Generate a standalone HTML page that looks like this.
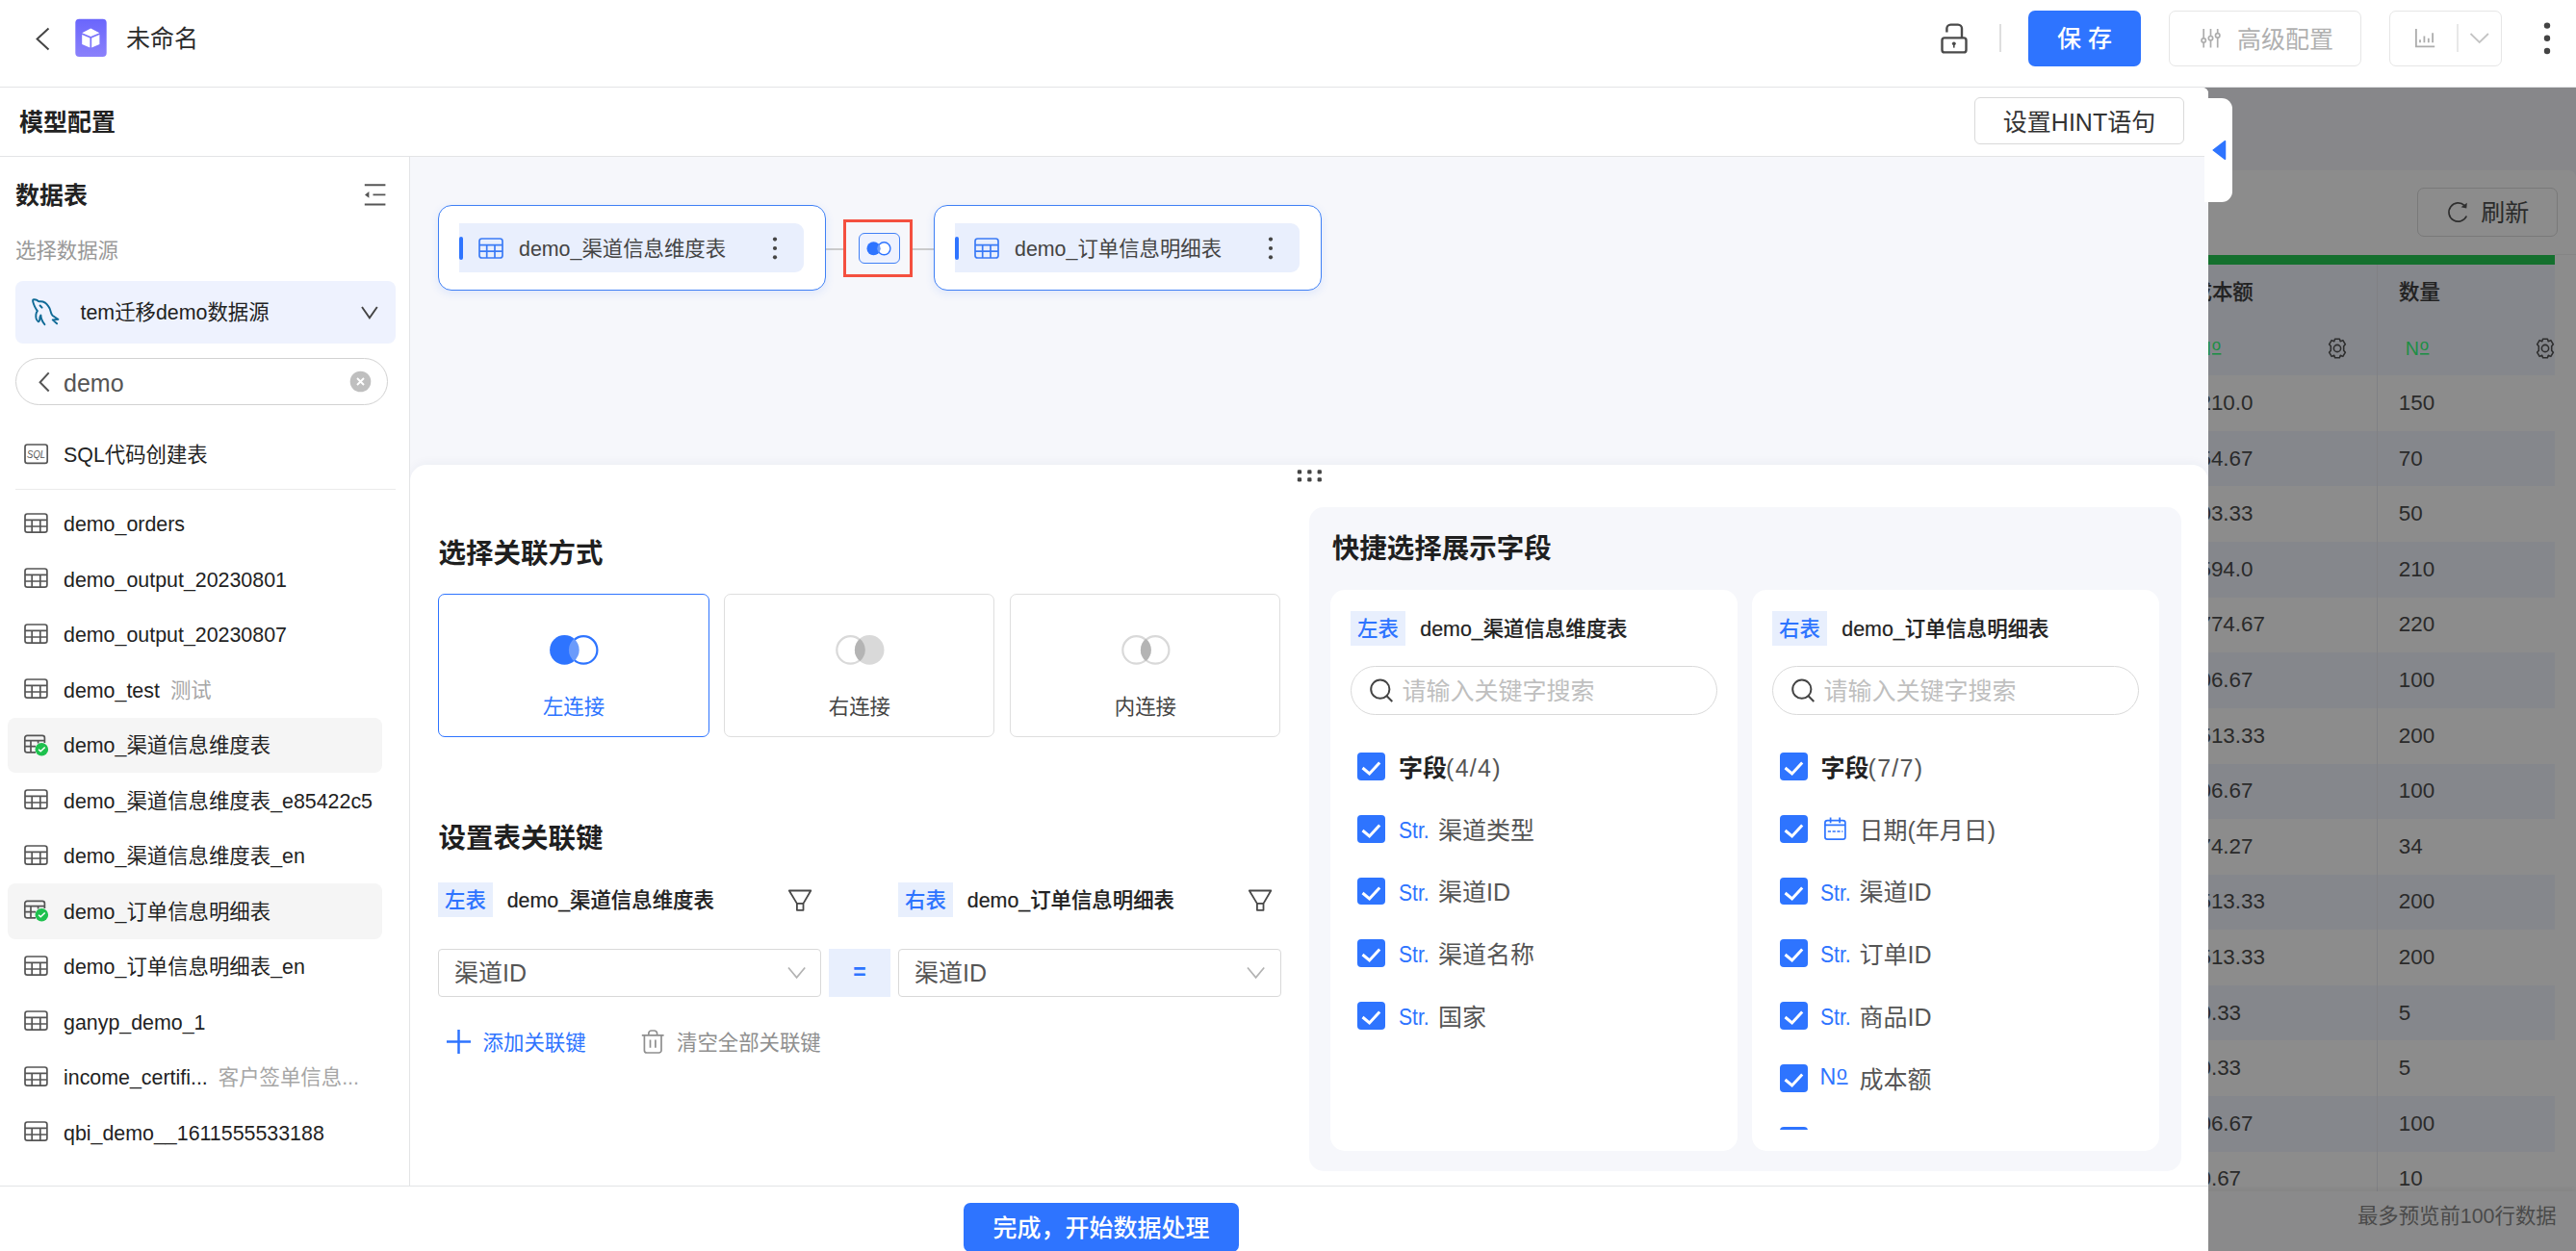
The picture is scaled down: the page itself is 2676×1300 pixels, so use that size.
<!DOCTYPE html>
<html lang="zh-CN">
<head>
<meta charset="utf-8">
<title>模型配置</title>
<style>
*{box-sizing:border-box;margin:0;padding:0}
html,body{width:2676px;height:1300px;overflow:hidden;background:#fff}
body{position:relative;font-family:"Liberation Sans","Noto Sans CJK SC",sans-serif;color:#333;font-size:21.4px;-webkit-font-smoothing:antialiased}
.abs{position:absolute}
.t{position:absolute;white-space:nowrap;line-height:1;transform:translateY(-50%)}
svg{position:absolute;overflow:visible}
.b{font-weight:700}
.m{font-weight:500;-webkit-text-stroke:.2px currentColor}
/* ---------- top header ---------- */
#hdr{position:absolute;left:0;top:0;width:2676px;height:91px;background:#fff;border-bottom:1px solid #e3e4e6}
.btn{position:absolute;top:11px;height:58px;border-radius:7px}
/* ---------- underlying page (right) ---------- */
#under{position:absolute;left:2280px;top:91px;width:396px;height:1209px;background:#87878a;overflow:hidden}
.trow{position:absolute;left:0;width:374px;height:57.6px}
.tc{position:absolute;top:50%;transform:translateY(-50%);line-height:1;font-size:22.400px;color:#2a2a2a;white-space:nowrap}
/* ---------- modal ---------- */
#modal{position:absolute;left:0;top:91px;width:2294px;border-radius:0 6px 0 0;height:1209px;background:#fff;overflow:hidden}
#mhead{position:absolute;left:0;top:0;width:2294px;height:72px;border-bottom:1px solid #e3e4e6;background:#fff}
#side{position:absolute;left:0;top:72px;width:426px;height:1069px;border-right:1px solid #e3e4e6;background:#fff}
#canvas{position:absolute;left:426px;top:72px;width:1868px;height:1069px;background:#f6f7fb;overflow:hidden}
#foot{position:absolute;left:0;top:1141px;width:2294px;height:68px;border-top:1px solid #e3e4e6;background:#fff}
.li{position:absolute;left:8px;width:389px;height:57.5px;border-radius:8px}
.li.sel{background:#f5f5f5}
.li svg{left:17px;top:17px}
.li .t{left:58px;top:calc(50% + 1.6px);color:#222}
.li .g{color:#a6a6a6;margin-left:11px}
.node{position:absolute;top:50px;height:89px;border:1.5px solid #3f80f5;border-radius:14px;background:#fff;box-shadow:0 3px 10px rgba(46,116,255,.12)}
.chip{position:absolute;left:21px;top:18px;height:51px;background:#e9effd;border-radius:0 9px 9px 0}
.chip i{position:absolute;left:0;top:13.500px;width:4px;height:24.500px;background:#2e74ff;border-radius:2px}
#panel{position:absolute;left:0;top:320px;width:1868px;height:760px;background:#fff;border-radius:17px 17px 0 0;box-shadow:0 -3px 10px rgba(30,40,90,.04)}
.h2{font-size:28.5px;font-weight:700;color:#1f1f1f}
.jc{position:absolute;top:134px;width:281.300px;height:149px;border:1px solid #dedede;border-radius:7px;background:#fff}
.jc.on{border:1.5px solid #2e74ff}
.jc .t{left:0;width:100%;text-align:center;top:117.500px;color:#444}
.jc.on .t{color:#2e74ff}
.tag{position:absolute;width:57px;height:36px;background:#e8effd;color:#2e74ff;text-align:center;line-height:38px;font-size:21.4px;font-weight:500;white-space:nowrap}
.sel2{position:absolute;top:503px;height:50px;border:1px solid #d9d9d9;border-radius:4px;background:#fff}
.sel2 .t{left:16px;top:50%;font-size:25px;color:#555}
#quick{position:absolute;left:934px;top:44px;width:906px;height:690px;background:#f6f7fb;border-radius:15px}
.qc{position:absolute;top:86px;width:423px;height:583px;background:#fff;border-radius:15px;overflow:hidden}
.qlist{position:absolute;left:0;top:0;width:423px;height:561px;overflow:hidden}
.srch{position:absolute;left:21px;top:79px;width:381px;height:51px;border:1px solid #d9d9d9;border-radius:26px;background:#fff}
.srch .t{left:52.500px;top:50%;font-size:25px;color:#bfbfbf}
.cb{position:absolute;left:28px;width:29px;height:29px;border-radius:4px;background:#2e74ff}
.cb svg{left:0;top:0}
.fr{position:absolute;left:0;width:423px;height:29px}
.fr .t{top:50%;font-size:25px;color:#555}
.fr .ty{left:72px;color:#2e74ff;font-size:24px;letter-spacing:-1px}
.fr .nm{left:112px}
</style>
</head>
<body>
<div id="hdr">
<svg style="left:0;top:0" width="130" height="90"><path d="M50.5 29.5 L38.6 40.4 L50.5 51.5" fill="none" stroke="#444" stroke-width="2"/>
<defs><linearGradient id="lg" x1="0" y1="0" x2="0" y2="1"><stop offset="0" stop-color="#6a66fc"/><stop offset="1" stop-color="#8b81fb"/></linearGradient></defs>
<rect x="78.3" y="19.8" width="32.4" height="39.3" rx="4" fill="url(#lg)"/>
<path d="M94.3 29.4 L103.4 34.2 L94.3 38 L85.2 34.2 Z M85.2 36 L93.4 39.5 L93.4 49.4 L85.2 45.9 Z M103.4 36 L95.2 39.5 L95.2 49.4 L103.4 45.9 Z" fill="#fff"/></svg>
<span class="t" style="left:131px;top:40px;font-size:25px;color:#2b2b2b">未命名</span>
<svg style="left:2010px;top:20px" width="40" height="40"><rect x="7.5" y="19.4" width="25" height="15" rx="2.5" fill="none" stroke="#4a4a4a" stroke-width="2.4"/><path d="M12.4 13.5 V9.6 a4 4 0 0 1 4 -4 h7.6 a4 4 0 0 1 4 4 V19" fill="none" stroke="#4a4a4a" stroke-width="2.4"/><circle cx="19.8" cy="25.3" r="1.9" fill="#4a4a4a"/><rect x="19" y="26" width="1.6" height="3.6" fill="#4a4a4a"/></svg>
<div class="abs" style="left:2077px;top:25px;width:2px;height:29px;background:#dedede"></div>
<div class="btn" style="left:2107px;width:117px;background:#2e74ff"><span class="t" style="left:0;width:100%;text-align:center;top:29px;font-size:25px;font-weight:500;color:#fff;white-space:pre">保 存</span></div>
<div class="btn" style="left:2253px;width:200px;border:1px solid #e6e6e6;background:#fff">
<svg style="left:28.500px;top:13px" width="30" height="30" stroke="#adadad" stroke-width="1.7" fill="#fff"><path d="M6.2 4.9V24.5M13.5 4.9V24.5M20.7 4.9V24.5"/><circle cx="6.2" cy="17" r="2.2"/><circle cx="13.5" cy="14.7" r="2.2"/><circle cx="20.7" cy="11.9" r="2.2"/></svg>
<span class="t" style="left:70px;top:29px;font-size:25px;color:#b0b0b0">高级配置</span></div>
<div class="btn" style="left:2482px;width:117px;border:1px solid #e6e6e6;background:#fff">
<svg style="left:19.700px;top:13px" width="30" height="30" stroke="#adadad" stroke-width="1.8" fill="none"><path d="M6.9 5V23.3H26.200M11 19.3V16.2M15.4 19.3V12.5M19.8 19.3V14.8M24.1 19.3V9.2"/></svg>
<div class="abs" style="left:69px;top:13px;width:2px;height:29px;background:#e8e8e8"></div>
<svg style="left:79.300px;top:17.300px" width="30" height="20" stroke="#c4c4c4" stroke-width="1.8" fill="none"><path d="M4.5 6 L13.7 15 L22.9 6"/></svg></div>
<svg style="left:2636px;top:18px" width="20" height="44" fill="#444"><circle cx="10" cy="8.6" r="3.2"/><circle cx="10" cy="21.8" r="3.2"/><circle cx="10" cy="35" r="3.2"/></svg>
</div>
<div id="under">
<div class="abs" style="left:0;top:86px;width:396px;height:1130px;background:#8c8c8c;border-radius:0 7px 0 0"></div>
<div class="abs" style="left:231.3px;top:103.600px;width:146px;height:51px;border:1px solid #797979;border-radius:7px"><svg style="left:28.500px;top:12px" width="26" height="26" fill="none" stroke="#2e2e2e" stroke-width="1.700"><path d="M19.200 5.600A9.600 9.600 0 1 0 21.300 16.500"/><path d="M21.800 2.800L21.300 8.600L15.600 7.200Z" fill="#2e2e2e" stroke="none"/></svg><span class="t" style="left:65px;top:25.300px;font-size:25px;color:#2b2b2b">刷新</span></div>
<div class="abs" style="left:374px;top:173px;width:30px;height:1px;background:#858585"></div>
<div class="abs" style="left:0;top:173.8px;width:374px;height:10.200px;background:#14702e"></div>
<div class="abs" style="left:0;top:184px;width:374px;height:115.500px;background:#85878c;border-bottom:1px solid #7e8085"></div>
<div class="trow" style="top:299.3px;background:#8c8c8c"><span class="tc" style="left:-8px">1210.0</span><span class="tc" style="left:211.8px">150</span></div>
<div class="trow" style="top:356.9px;background:#85878c"><span class="tc" style="left:-8px">354.67</span><span class="tc" style="left:211.8px">70</span></div>
<div class="trow" style="top:414.5px;background:#8c8c8c"><span class="tc" style="left:-8px">303.33</span><span class="tc" style="left:211.8px">50</span></div>
<div class="trow" style="top:472.1px;background:#85878c"><span class="tc" style="left:-8px">1594.0</span><span class="tc" style="left:211.8px">210</span></div>
<div class="trow" style="top:529.7px;background:#8c8c8c"><span class="tc" style="left:-8px">1774.67</span><span class="tc" style="left:211.8px">220</span></div>
<div class="trow" style="top:587.3px;background:#85878c"><span class="tc" style="left:-8px">306.67</span><span class="tc" style="left:211.8px">100</span></div>
<div class="trow" style="top:644.9px;background:#8c8c8c"><span class="tc" style="left:-8px">1513.33</span><span class="tc" style="left:211.8px">200</span></div>
<div class="trow" style="top:702.5px;background:#85878c"><span class="tc" style="left:-8px">306.67</span><span class="tc" style="left:211.8px">100</span></div>
<div class="trow" style="top:760.1px;background:#8c8c8c"><span class="tc" style="left:-8px">374.27</span><span class="tc" style="left:211.8px">34</span></div>
<div class="trow" style="top:817.7px;background:#85878c"><span class="tc" style="left:-8px">1513.33</span><span class="tc" style="left:211.8px">200</span></div>
<div class="trow" style="top:875.3px;background:#8c8c8c"><span class="tc" style="left:-8px">1513.33</span><span class="tc" style="left:211.8px">200</span></div>
<div class="trow" style="top:932.9px;background:#85878c"><span class="tc" style="left:-8px">30.33</span><span class="tc" style="left:211.8px">5</span></div>
<div class="trow" style="top:990.5px;background:#8c8c8c"><span class="tc" style="left:-8px">30.33</span><span class="tc" style="left:211.8px">5</span></div>
<div class="trow" style="top:1048.1px;background:#85878c"><span class="tc" style="left:-8px">306.67</span><span class="tc" style="left:211.8px">100</span></div>
<div class="trow" style="top:1105.7px;background:#8c8c8c"><span class="tc" style="left:-8px">30.67</span><span class="tc" style="left:211.8px">10</span></div>
<div class="abs" style="left:189px;top:184px;width:1px;height:963px;background:#808185"></div>
<span class="t m" style="left:-3.5px;top:214.3px;color:#222">成本额</span><span class="t m" style="left:212px;top:214.3px;color:#222">数量</span>
<svg style="left:3.6px;top:262.5px" width="28" height="20" fill="#1c8f45" font-family="Liberation Sans,sans-serif"><text x="-1.200" y="14.700" font-size="20.300" textLength="14.200" lengthAdjust="spacingAndGlyphs">N</text><text x="13.800" y="10" font-size="16.800">o</text><path d="M14.100 13.800H23.400" stroke="#1c8f45" stroke-width="1.600"/></svg><svg style="left:219.7px;top:262.5px" width="28" height="20" fill="#1c8f45" font-family="Liberation Sans,sans-serif"><text x="-1.200" y="14.700" font-size="20.300" textLength="14.200" lengthAdjust="spacingAndGlyphs">N</text><text x="13.800" y="10" font-size="16.800">o</text><path d="M14.100 13.800H23.400" stroke="#1c8f45" stroke-width="1.600"/></svg>
<svg style="left:136.30000000000018px;top:258.7px" width="24" height="24" viewBox="-12.900 -12.900 25.800 25.800" fill="none" stroke="#2e2e2e" stroke-width="1.700" stroke-linejoin="round"><path d="M-2.6 -10.400 L2.600 -10.400 L3.500 -7.800 L6.300 -9 L9 -4.500 L7.200 -2.300 L7.200 2.300 L9 4.500 L6.300 9 L3.500 7.800 L2.600 10.400 L-2.600 10.400 L-3.500 7.800 L-6.300 9 L-9 4.500 L-7.200 2.300 L-7.200 -2.300 L-9 -4.500 L-6.300 -9 L-3.500 -7.800 Z"/><circle r="3.900"/></svg>
<div class="abs" style="left:350px;top:254px;width:24px;height:34px;overflow:hidden"><svg style="left:2.199999999999818px;top:4.699999999999989px" width="24" height="24" viewBox="-12.900 -12.900 25.800 25.800" fill="none" stroke="#2e2e2e" stroke-width="1.700" stroke-linejoin="round"><path d="M-2.6 -10.400 L2.600 -10.400 L3.500 -7.800 L6.300 -9 L9 -4.500 L7.200 -2.300 L7.200 2.300 L9 4.500 L6.300 9 L3.500 7.800 L2.600 10.400 L-2.600 10.400 L-3.500 7.800 L-6.300 9 L-9 4.500 L-7.200 2.300 L-7.200 -2.300 L-9 -4.500 L-6.300 -9 L-3.500 -7.800 Z"/><circle r="3.900"/></svg></div>
<div class="abs" style="left:0;top:1147px;width:396px;height:70px;background:#8a8a8b;box-shadow:0 -2px 5px rgba(0,0,0,.06)"><span class="t" style="right:20.3px;top:26.500px;color:#4a4a4a">最多预览前100行数据</span></div>
</div>
<div class="abs" style="left:2290px;top:102px;width:28.900px;height:107.800px;background:#fff;border-radius:0 11px 11px 0;z-index:5"><svg style="left:6.500px;top:41.800px" width="16" height="24"><path d="M2.200 12L14.500 2.700V21.300Z" fill="#2e74ff" stroke="#2e74ff" stroke-width="1.500" stroke-linejoin="round"/></svg></div>
<div id="modal">
<div id="mhead"><span class="t b" style="left:20px;top:35.5px;font-size:25px;color:#222">模型配置</span><div class="abs" style="left:2051px;top:10.200px;width:218px;height:49.300px;border:1px solid #d9d9d9;border-radius:6px;background:#fff"><span class="t" style="left:0;width:100%;text-align:center;top:24.5px;font-size:25px;color:#333">设置HINT语句</span></div></div>
<div id="side">
<span class="t b" style="left:16px;top:39.6px;font-size:25px;color:#222">数据表</span>
<svg style="left:376px;top:25px" width="28" height="28" fill="none" stroke="#555" stroke-width="1.9"><path d="M2.8 4.2H24.4M11.5 14.4H24.4M2.8 24.5H24.4"/><path d="M7.4 11V17.8L3 14.4Z" fill="#555" stroke="none"/></svg>
<span class="t" style="left:16px;top:99.1px;color:#999">选择数据源</span>
<div class="abs" style="left:16px;top:129px;width:395px;height:64.5px;background:#eef2fe;border-radius:8px"><svg style="left:14px;top:16px" width="34" height="32" fill="none" stroke="#0f6a96" stroke-width="1.900" stroke-linejoin="round" stroke-linecap="round"><path d="M4.1 3.9C4.3 3 6.5 3 8.5 3.900L9.8 5C12 5.3 13 5.200 14.600 5.500C16.500 6.300 17.6 7 18.600 8.100C20 9.800 21 11.200 21.600 12.500C22.300 14.300 22.500 15.600 23 16.900C23.400 18.200 23.800 19.200 24.700 20C26.600 21.300 28.400 22.500 30.400 23.900L24.700 24.400L29.100 28.300M4.1 3.900C4 5.500 4.400 6.500 4.900 7.700C5.600 9.700 6.600 11.600 7.600 13.400L8.900 15.100C8 16.200 7.600 17.200 7.400 18.600C7.200 20.300 7.300 21.500 7.600 23C8.100 24.600 8.800 25.600 9.800 26.300C10.700 25.800 11 25.400 11.100 24.800C11.300 23.600 11.300 22.500 11.500 21.300L12.400 19.500C12.500 21 12.800 22.600 13.300 23.900C14 26 15 27.600 16.400 29.200"/><path d="M11.6 9.500L13.600 11.600" stroke-width="2"/></svg><span class="t" style="left:67.5px;top:33.8px;color:#222">tem迁移demo数据源</span><svg style="left:356px;top:22px" width="24" height="20" fill="none" stroke="#444" stroke-width="1.9"><path d="M4 5L11.9 16.3L19.800 5"/></svg></div>
<div class="abs" style="left:16px;top:209.3px;width:387px;height:48.5px;border:1px solid #d2d2d2;border-radius:25px;background:#fff"><svg style="left:20px;top:12px" width="16" height="24" fill="none" stroke="#555" stroke-width="2"><path d="M13.700 2.400L4.600 12.200L13.700 21.500"/></svg><span class="t" style="left:49px;top:24.4px;font-size:25px;color:#555">demo</span><svg style="left:345.500px;top:12px" width="23" height="23"><circle cx="11.5" cy="11.5" r="10.8" fill="#bfbfbf"/><path d="M8 8L15 15M15 8L8 15" stroke="#fff" stroke-width="1.9"/></svg></div>
<div class="li" style="top:280.55px"><svg style="top:17.4px" width="26" height="23" fill="none" stroke="#555" stroke-width="1.7"><rect x="1" y="1" width="23.2" height="19.4" rx="2.4"/><text x="12.6" y="14.6" font-size="10.5" font-style="italic" text-anchor="middle" fill="#555" stroke="none" font-family="Liberation Sans,sans-serif" textLength="19" lengthAdjust="spacingAndGlyphs">SQL</text></svg><span class="t">SQL代码创建表</span></div>
<div class="abs" style="left:16px;top:345px;width:395px;height:1px;background:#ebebeb"></div>
<div class="li" style="top:352.65px"><svg width="26" height="22" fill="none" stroke="#555" stroke-width="1.7"><rect x="1" y="1" width="22.9" height="19.1" rx="2.4"/><path d="M1 7.4H23.9M1 14H23.9M8.2 7.4V20.1M16.8 7.4V20.1"/></svg><span class="t">demo_orders</span></div>
<div class="li" style="top:410.18px"><svg width="26" height="22" fill="none" stroke="#555" stroke-width="1.7"><rect x="1" y="1" width="22.9" height="19.1" rx="2.4"/><path d="M1 7.4H23.9M1 14H23.9M8.2 7.4V20.1M16.8 7.4V20.1"/></svg><span class="t">demo_output_20230801</span></div>
<div class="li" style="top:467.71px"><svg width="26" height="22" fill="none" stroke="#555" stroke-width="1.7"><rect x="1" y="1" width="22.9" height="19.1" rx="2.4"/><path d="M1 7.4H23.9M1 14H23.9M8.2 7.4V20.1M16.8 7.4V20.1"/></svg><span class="t">demo_output_20230807</span></div>
<div class="li" style="top:525.24px"><svg width="26" height="22" fill="none" stroke="#555" stroke-width="1.7"><rect x="1" y="1" width="22.9" height="19.1" rx="2.4"/><path d="M1 7.4H23.9M1 14H23.9M8.2 7.4V20.1M16.8 7.4V20.1"/></svg><span class="t">demo_test<span class="g">测试</span></span></div>
<div class="li sel" style="top:582.77px"><svg width="30" height="26" fill="none" stroke="#555" stroke-width="1.7"><path d="M12 18.800H3.200A2.400 2.400 0 0 1 0.800 16.400V3.800A2.400 2.400 0 0 1 3.200 1.400H19A2.400 2.400 0 0 1 21.400 3.800V9M0.800 6.600H21.400M0.800 12.700H12M7 6.600V18.800M14.600 6.600V9.500"/><circle cx="18.300" cy="15.700" r="6.800" fill="#1ec14e" stroke="none"/><path d="M15.100 15.800L17.200 17.800L21.700 13.500" stroke="#fff" stroke-width="1.500"/></svg><span class="t">demo_渠道信息维度表</span></div>
<div class="li" style="top:640.3px"><svg width="26" height="22" fill="none" stroke="#555" stroke-width="1.7"><rect x="1" y="1" width="22.9" height="19.1" rx="2.4"/><path d="M1 7.4H23.9M1 14H23.9M8.2 7.4V20.1M16.8 7.4V20.1"/></svg><span class="t">demo_渠道信息维度表_e85422c5</span></div>
<div class="li" style="top:697.83px"><svg width="26" height="22" fill="none" stroke="#555" stroke-width="1.7"><rect x="1" y="1" width="22.9" height="19.1" rx="2.4"/><path d="M1 7.4H23.9M1 14H23.9M8.2 7.4V20.1M16.8 7.4V20.1"/></svg><span class="t">demo_渠道信息维度表_en</span></div>
<div class="li sel" style="top:755.36px"><svg width="30" height="26" fill="none" stroke="#555" stroke-width="1.7"><path d="M12 18.800H3.200A2.400 2.400 0 0 1 0.800 16.400V3.800A2.400 2.400 0 0 1 3.200 1.400H19A2.400 2.400 0 0 1 21.400 3.800V9M0.800 6.600H21.400M0.800 12.700H12M7 6.600V18.800M14.600 6.600V9.500"/><circle cx="18.300" cy="15.700" r="6.800" fill="#1ec14e" stroke="none"/><path d="M15.100 15.800L17.200 17.800L21.700 13.500" stroke="#fff" stroke-width="1.500"/></svg><span class="t">demo_订单信息明细表</span></div>
<div class="li" style="top:812.89px"><svg width="26" height="22" fill="none" stroke="#555" stroke-width="1.7"><rect x="1" y="1" width="22.9" height="19.1" rx="2.4"/><path d="M1 7.4H23.9M1 14H23.9M8.2 7.4V20.1M16.8 7.4V20.1"/></svg><span class="t">demo_订单信息明细表_en</span></div>
<div class="li" style="top:870.42px"><svg width="26" height="22" fill="none" stroke="#555" stroke-width="1.7"><rect x="1" y="1" width="22.9" height="19.1" rx="2.4"/><path d="M1 7.4H23.9M1 14H23.9M8.2 7.4V20.1M16.8 7.4V20.1"/></svg><span class="t">ganyp_demo_1</span></div>
<div class="li" style="top:927.95px"><svg width="26" height="22" fill="none" stroke="#555" stroke-width="1.7"><rect x="1" y="1" width="22.9" height="19.1" rx="2.4"/><path d="M1 7.4H23.9M1 14H23.9M8.2 7.4V20.1M16.8 7.4V20.1"/></svg><span class="t">income_certifi...<span class="g">客户签单信息...</span></span></div>
<div class="li" style="top:985.48px"><svg width="26" height="22" fill="none" stroke="#555" stroke-width="1.7"><rect x="1" y="1" width="22.9" height="19.1" rx="2.4"/><path d="M1 7.4H23.9M1 14H23.9M8.2 7.4V20.1M16.8 7.4V20.1"/></svg><span class="t">qbi_demo__1611555533188</span></div>
</div>
<div id="canvas">
<div class="abs" style="left:431px;top:94.500px;width:114px;height:2px;background:#cbcbcb"></div>
<div class="node" style="left:29px;width:403px"><div class="chip" style="width:358px"><i></i><svg style="left:20px;top:14.500px" width="26" height="22" fill="none" stroke="#3b7bf6" stroke-width="1.7"><rect x="1" y="1" width="24" height="20" rx="2.6"/><path d="M1 7.6H25M1 14.2H25M8.700 7.600V21M17 7.600V21"/></svg><span class="t" style="left:62px;top:27.800px;color:#444">demo_渠道信息维度表</span><svg style="left:323.500px;top:14.400px" width="8" height="24" fill="#444"><circle cx="4" cy="2.6" r="2.1"/><circle cx="4" cy="12" r="2.1"/><circle cx="4" cy="21.300" r="2.1"/></svg></div></div>
<div class="node" style="left:544px;width:403px"><div class="chip" style="width:358px"><i></i><svg style="left:20px;top:14.500px" width="26" height="22" fill="none" stroke="#3b7bf6" stroke-width="1.7"><rect x="1" y="1" width="24" height="20" rx="2.6"/><path d="M1 7.6H25M1 14.2H25M8.700 7.600V21M17 7.600V21"/></svg><span class="t" style="left:62px;top:27.800px;color:#444">demo_订单信息明细表</span><svg style="left:323.500px;top:14.400px" width="8" height="24" fill="#444"><circle cx="4" cy="2.6" r="2.1"/><circle cx="4" cy="12" r="2.1"/><circle cx="4" cy="21.300" r="2.1"/></svg></div></div>
<div class="abs" style="left:450.400px;top:65.300px;width:71.300px;height:59.500px;border:3.600px solid #f4503f;background:#f6f7fb"></div>
<div class="abs" style="left:466.200px;top:79px;width:42.800px;height:31.700px;border:1.200px solid #4080f6;border-radius:6px;background:#eef2fe"><svg style="left:6px;top:6px" width="30" height="18"><circle cx="8.5" cy="9.300" r="7" fill="#2e74ff"/><circle cx="19.400" cy="9.300" r="6.500" fill="#fff" stroke="#2e74ff" stroke-width="1.400"/><path d="M13.950 4.91A7 7 0 0 1 13.950 13.690A7 7 0 0 1 13.950 4.910Z" fill="#6d9df8"/></svg></div>
<div id="panel">
<svg style="left:921px;top:4px" width="30" height="18" fill="#444"><rect x="0.8" y="1.3" width="4.3" height="4.300" rx="1.3"/><rect x="11.2" y="1.3" width="4.300" height="4.3" rx="1.3"/><rect x="21.6" y="1.3" width="4.3" height="4.3" rx="1.3"/><rect x="0.8" y="9.3" width="4.3" height="4.3" rx="1.3"/><rect x="11.2" y="9.300" width="4.3" height="4.3" rx="1.3"/><rect x="21.600" y="9.300" width="4.3" height="4.3" rx="1.3"/></svg>
<span class="t h2" style="left:29.400px;top:92px">选择关联方式</span>
<div class="jc on" style="left:29.400px"><svg style="left:0;top:0" width="281" height="120"><circle cx="130.400" cy="57.4" r="15.3" fill="#2e74ff"/><circle cx="150.200" cy="57.4" r="14.200" fill="#fff" stroke="#2e74ff" stroke-width="2.200"/><path transform="translate(0,-0.8)" d="M140.30 46.53A15.3 15.3 0 0 1 140.30 69.87A15.3 15.3 0 0 1 140.30 46.53Z" fill="#6b9bfb"/></svg><span class="t">左连接</span></div>
<div class="jc" style="left:326.200px"><svg style="left:0;top:0" width="281" height="120"><circle cx="130.500" cy="57.4" r="14.200" fill="#fff" stroke="#d9d9d9" stroke-width="2.200"/><circle cx="150.200" cy="57.4" r="15.3" fill="#d9d9d9"/><path transform="translate(0,-0.8)" d="M140.35 46.49A15.3 15.3 0 0 1 140.35 69.91A15.3 15.3 0 0 1 140.35 46.49Z" fill="#b4b4b4"/></svg><span class="t">右连接</span></div>
<div class="jc" style="left:623.200px"><svg style="left:0;top:0" width="281" height="120"><circle cx="130.500" cy="57.4" r="14.200" fill="#fff" stroke="#d9d9d9" stroke-width="2.200"/><circle cx="150.200" cy="57.4" r="14.200" fill="none" stroke="#d9d9d9" stroke-width="2.200"/><path transform="translate(0,-0.8)" d="M140.35 46.49A15.3 15.3 0 0 1 140.35 69.91A15.3 15.3 0 0 1 140.35 46.49Z" fill="#b4b4b4"/></svg><span class="t">内连接</span></div>
<span class="t h2" style="left:29.400px;top:388.300px">设置表关联键</span>
<div class="tag" style="left:29px;top:434px">左表</div><span class="t m" style="left:100.700px;top:453.600px;color:#222">demo_渠道信息维度表</span><svg style="left:392.300px;top:439.700px" width="26" height="26" fill="none" stroke="#484848" stroke-width="1.800" stroke-linejoin="round"><path d="M1.800 2.500H24.300L16.500 15.900V22.800H9.900V15.900Z"/><path d="M9.900 15.900H16.500"/></svg>
<div class="tag" style="left:507px;top:434px">右表</div><span class="t m" style="left:578.800px;top:453.600px;color:#222">demo_订单信息明细表</span><svg style="left:870.300px;top:439.700px" width="26" height="26" fill="none" stroke="#484848" stroke-width="1.800" stroke-linejoin="round"><path d="M1.800 2.500H24.300L16.500 15.900V22.800H9.900V15.900Z"/><path d="M9.900 15.900H16.500"/></svg>
<div class="sel2" style="left:29px;width:398px"><span class="t">渠道ID</span><svg style="left:362px;top:16.500px" width="20" height="14" fill="none" stroke="#b3b3b3" stroke-width="1.700"><path d="M1 1.500L9.600 11.800L18.200 1.500"/></svg></div>
<div class="abs" style="left:435px;top:503px;width:64px;height:50px;background:#e8effd"><span class="t b" style="left:0;width:100%;text-align:center;top:24px;font-size:23px;color:#2e74ff">=</span></div>
<div class="sel2" style="left:507px;width:398px"><span class="t">渠道ID</span><svg style="left:361px;top:16.500px" width="20" height="14" fill="none" stroke="#b3b3b3" stroke-width="1.700"><path d="M1 1.500L9.600 11.800L18.200 1.500"/></svg></div>
<svg style="left:38px;top:586.800px" width="26" height="26" fill="none" stroke="#2e74ff" stroke-width="2.500"><path d="M12.500 0V25M0 12.500H25"/></svg><span class="t" style="left:75.600px;top:601.500px;color:#2e74ff">添加关联键</span>
<svg style="left:240px;top:587px" width="26" height="26" fill="none" stroke="#8f8f8f" stroke-width="1.700"><path d="M0.800 5.800H23.600M7.800 5.300V4A3 3 0 0 1 10.800 1H13.600A3 3 0 0 1 16.600 4V5.300M3.400 6V21.500A2.500 2.500 0 0 0 5.900 24H18.500A2.500 2.500 0 0 0 21 21.500V6M9.500 10.500V18.800M14.900 10.500V18.800"/></svg><span class="t" style="left:277px;top:601.500px;color:#8f8f8f">清空全部关联键</span>
<div id="quick"><span class="t h2" style="left:23.800px;top:42.800px">快捷选择展示字段</span>
<div class="qc" style="left:22px"><div class="tag" style="left:21px;top:22px">左表</div><span class="t m" style="left:93.300px;top:41.800px;color:#222">demo_渠道信息维度表</span><div class="srch"><svg style="left:18px;top:11px" width="28" height="28" fill="none" stroke="#444" stroke-width="2"><circle cx="11.800" cy="12.200" r="9.600"/><path d="M18.600 19.300L24.300 25"/></svg><span class="t">请输入关键字搜索</span></div><div class="qlist">
<div class="fr" style="top:168.9px"><div class="cb" style="top:0;left:28px;width:28.800px;height:28.800px"><svg width="29" height="29" fill="none" stroke="#fff" stroke-width="3"><path d="M5.500 16L12.600 21.900L23.200 10.500"/></svg></div><span class="t" style="left:71px;top:15.800px;color:#555"><b style="font-weight:700;color:#222">字段</b><span style="letter-spacing:1.300px;margin-left:-1px">(4/4)</span></span></div>
<div class="fr" style="top:233.8px"><div class="cb" style="top:0;left:28px;width:28.800px;height:28.800px"><svg width="29" height="29" fill="none" stroke="#fff" stroke-width="3"><path d="M5.500 16L12.600 21.900L23.200 10.500"/></svg></div><span class="t ty" style="left:70.5px;top:16px;transform:translateY(-50%) scaleX(.88);transform-origin:left center;letter-spacing:0">Str.</span><span class="t nm" style="left:112px;top:15.800px">渠道类型</span></div>
<div class="fr" style="top:298.6px"><div class="cb" style="top:0;left:28px;width:28.800px;height:28.800px"><svg width="29" height="29" fill="none" stroke="#fff" stroke-width="3"><path d="M5.500 16L12.600 21.900L23.200 10.500"/></svg></div><span class="t ty" style="left:70.5px;top:16px;transform:translateY(-50%) scaleX(.88);transform-origin:left center;letter-spacing:0">Str.</span><span class="t nm" style="left:112px;top:15.800px">渠道ID</span></div>
<div class="fr" style="top:363.4px"><div class="cb" style="top:0;left:28px;width:28.800px;height:28.800px"><svg width="29" height="29" fill="none" stroke="#fff" stroke-width="3"><path d="M5.500 16L12.600 21.900L23.200 10.500"/></svg></div><span class="t ty" style="left:70.5px;top:16px;transform:translateY(-50%) scaleX(.88);transform-origin:left center;letter-spacing:0">Str.</span><span class="t nm" style="left:112px;top:15.800px">渠道名称</span></div>
<div class="fr" style="top:428.3px"><div class="cb" style="top:0;left:28px;width:28.800px;height:28.800px"><svg width="29" height="29" fill="none" stroke="#fff" stroke-width="3"><path d="M5.500 16L12.600 21.900L23.200 10.500"/></svg></div><span class="t ty" style="left:70.5px;top:16px;transform:translateY(-50%) scaleX(.88);transform-origin:left center;letter-spacing:0">Str.</span><span class="t nm" style="left:112px;top:15.800px">国家</span></div>
</div></div>
<div class="qc" style="left:460px"><div class="tag" style="left:21px;top:22px">右表</div><span class="t m" style="left:93.300px;top:41.800px;color:#222">demo_订单信息明细表</span><div class="srch"><svg style="left:18px;top:11px" width="28" height="28" fill="none" stroke="#444" stroke-width="2"><circle cx="11.800" cy="12.200" r="9.600"/><path d="M18.600 19.300L24.300 25"/></svg><span class="t">请输入关键字搜索</span></div><div class="qlist">
<div class="fr" style="top:168.9px"><div class="cb" style="top:0;left:29px;width:28.800px;height:28.800px"><svg width="29" height="29" fill="none" stroke="#fff" stroke-width="3"><path d="M5.500 16L12.600 21.900L23.200 10.500"/></svg></div><span class="t" style="left:71.5px;top:15.800px;color:#555"><b style="font-weight:700;color:#222">字段</b><span style="letter-spacing:1.300px;margin-left:-1px">(7/7)</span></span></div>
<div class="fr" style="top:233.8px"><div class="cb" style="top:0;left:29px;width:28.800px;height:28.800px"><svg width="29" height="29" fill="none" stroke="#fff" stroke-width="3"><path d="M5.500 16L12.600 21.900L23.200 10.500"/></svg></div><svg style="left:74.0px;top:2.500px" width="26" height="26" fill="none" stroke="#2e74ff" stroke-width="1.700"><rect x="1.900" y="3.600" width="21" height="19.600" rx="2.400"/><path d="M7.600 0.600V6.300M17.100 0.600V6.300M1.900 8.300H22.900"/><path d="M4.800 15H20.400" stroke-dasharray="3.200 1.600"/></svg><span class="t nm" style="left:111.5px;top:15.800px">日期(年月日)</span></div>
<div class="fr" style="top:298.6px"><div class="cb" style="top:0;left:29px;width:28.800px;height:28.800px"><svg width="29" height="29" fill="none" stroke="#fff" stroke-width="3"><path d="M5.500 16L12.600 21.900L23.200 10.500"/></svg></div><span class="t ty" style="left:71.0px;top:16px;transform:translateY(-50%) scaleX(.88);transform-origin:left center;letter-spacing:0">Str.</span><span class="t nm" style="left:111.5px;top:15.800px">渠道ID</span></div>
<div class="fr" style="top:363.4px"><div class="cb" style="top:0;left:29px;width:28.800px;height:28.800px"><svg width="29" height="29" fill="none" stroke="#fff" stroke-width="3"><path d="M5.500 16L12.600 21.900L23.200 10.500"/></svg></div><span class="t ty" style="left:71.0px;top:16px;transform:translateY(-50%) scaleX(.88);transform-origin:left center;letter-spacing:0">Str.</span><span class="t nm" style="left:111.5px;top:15.800px">订单ID</span></div>
<div class="fr" style="top:428.3px"><div class="cb" style="top:0;left:29px;width:28.800px;height:28.800px"><svg width="29" height="29" fill="none" stroke="#fff" stroke-width="3"><path d="M5.500 16L12.600 21.900L23.200 10.500"/></svg></div><span class="t ty" style="left:71.0px;top:16px;transform:translateY(-50%) scaleX(.88);transform-origin:left center;letter-spacing:0">Str.</span><span class="t nm" style="left:111.5px;top:15.800px">商品ID</span></div>
<div class="fr" style="top:493.1px"><div class="cb" style="top:0;left:29px;width:28.800px;height:28.800px"><svg width="29" height="29" fill="none" stroke="#fff" stroke-width="3"><path d="M5.500 16L12.600 21.900L23.200 10.500"/></svg></div><svg style="left:72.0px;top:4px" width="32" height="22" fill="#2e74ff" font-family="Liberation Sans,sans-serif"><text x="-1.400" y="17.200" font-size="23.700" textLength="16.800" lengthAdjust="spacingAndGlyphs">N</text><text x="16" y="11.600" font-size="19.500">o</text><path d="M16.400 16.100H27.600" stroke="#2e74ff" stroke-width="1.800"/></svg><span class="t nm" style="left:111.5px;top:15.800px">成本额</span></div>
<div class="fr" style="top:558.0px"><div class="cb" style="top:0;left:29px;width:28.800px;height:28.800px"><svg width="29" height="29" fill="none" stroke="#fff" stroke-width="3"><path d="M5.500 16L12.600 21.900L23.200 10.500"/></svg></div></div>
</div></div>
</div>
</div>
</div>
<div id="foot"><div class="abs" style="left:1001px;top:17px;width:286px;height:50.500px;border-radius:7px;background:#2e74ff"><span class="t" style="left:0;width:100%;text-align:center;top:26px;font-size:25px;font-weight:500;color:#fff">完成，开始数据处理</span></div></div>
</div>
</body>
</html>
